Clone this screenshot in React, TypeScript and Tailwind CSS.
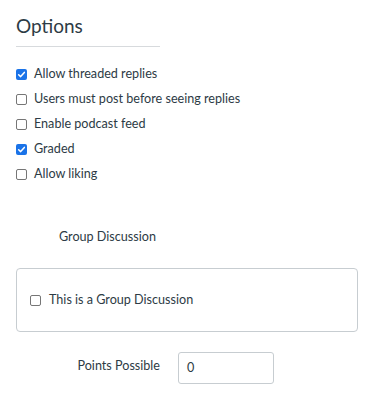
const Box = ({ checked }: { checked?: boolean }) =>
  checked ? (
    <span className="w-[11px] h-[11px] rounded-[2px] bg-[#1a73e8] flex items-center justify-center shrink-0">
      <svg viewBox="0 0 12 12" className="w-[9px] h-[9px]">
        <path d="M2.2 6.3 L4.9 8.8 L9.8 3.2" fill="none" stroke="white" strokeWidth="2" strokeLinecap="round" strokeLinejoin="round" />
      </svg>
    </span>
  ) : (
    <span className="w-[11px] h-[11px] rounded-[2px] border border-[#767676] bg-white shrink-0"></span>
  );

const Option = ({ label, checked }: { label: string; checked?: boolean }) => (
  <div className="h-[25px] flex items-center gap-[7px]">
    <Box checked={checked} />
    <span className="text-[12.6px] text-[#2d3b45]">{label}</span>
  </div>
);

export default function App() {
  return (
    <div className="w-[373px] h-[399px] bg-white pl-4 overflow-hidden" style={{ fontFamily: 'Lato, "Open Sans", sans-serif' }}>
      <h2 className="pt-[12px] text-[19px] leading-[28px] text-[#2d3b45] font-normal">Options</h2>
      <div className="w-[144px] mt-[6px] border-t border-[#d7dadd]"></div>

      <div className="mt-[15px] flex flex-col">
        <Option label="Allow threaded replies" checked />
        <Option label="Users must post before seeing replies" />
        <Option label="Enable podcast feed" />
        <Option label="Graded" checked />
        <Option label="Allow liking" />
      </div>

      <div className="mt-[40px] h-[20px] flex items-center pl-[43px] text-[12.6px] text-[#2d3b45]">Group Discussion</div>

      <div className="mt-[21px] w-[342px] h-[64px] border border-[#c7cdd1] rounded-[4px] flex items-center pl-[13px] gap-[8px]">
        <Box />
        <span className="text-[12.6px] text-[#2d3b45]">This is a Group Discussion</span>
      </div>

      <div className="mt-[20px] flex items-start">
        <div className="w-[144px] text-right text-[12.6px] text-[#2d3b45] pt-[5px]">Points Possible</div>
        <div className="ml-[18px] w-[96px] h-[32px] border border-[#c7cdd1] rounded-[3px] flex items-center pl-[8px] text-[12.6px] text-[#2d3b45]">0</div>
      </div>
    </div>
  );
}
